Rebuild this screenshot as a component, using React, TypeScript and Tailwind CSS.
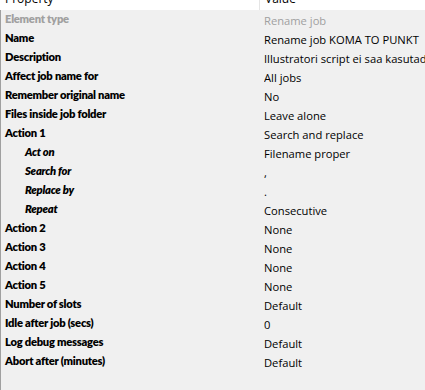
type Row = { label: string; value: string; sub?: boolean; disabled?: boolean };

const rows: Row[] = [
  { label: 'Element type', value: 'Rename job', disabled: true },
  { label: 'Name', value: 'Rename job KOMA TO PUNKT' },
  { label: 'Description', value: 'Illustratori script ei saa kasutada komasid' },
  { label: 'Affect job name for', value: 'All jobs' },
  { label: 'Remember original name', value: 'No' },
  { label: 'Files inside job folder', value: 'Leave alone' },
  { label: 'Action 1', value: 'Search and replace' },
  { label: 'Act on', value: 'Filename proper', sub: true },
  { label: 'Search for', value: ',', sub: true },
  { label: 'Replace by', value: '.', sub: true },
  { label: 'Repeat', value: 'Consecutive', sub: true },
  { label: 'Action 2', value: 'None' },
  { label: 'Action 3', value: 'None' },
  { label: 'Action 4', value: 'None' },
  { label: 'Action 5', value: 'None' },
  { label: 'Number of slots', value: 'Default' },
  { label: 'Idle after job (secs)', value: '0' },
  { label: 'Log debug messages', value: 'Default' },
  { label: 'Abort after (minutes)', value: 'Default' },
];

export default function App() {
  return (
    <div className="w-[425px] h-[390px] overflow-hidden bg-[#f0f0f0] flex flex-col">
      {/* Header (scrolled, only the bottom part shows) */}
      <div className="h-[10px] bg-white flex overflow-hidden shrink-0 text-[12px] text-black" style={{ fontFamily: '"Open Sans", sans-serif' }}>
        <div className="w-[260px] border-r border-[#e5e5e5] pl-[5px] -mt-[9px] leading-[16px]">Property</div>
        <div className="flex-1 pl-[5px] -mt-[9px] leading-[16px]">Value</div>
      </div>

      <div className="flex-1 border-l border-[#a0a0a0]">
        {rows.map((r) => (
          <div key={r.label} className="flex h-[19px] items-start">
            <div
              className={`w-[263px] shrink-0 font-extrabold text-[11.2px] tracking-[-0.25px] leading-[15px] pt-[1px] ${r.sub ? 'pl-[24px] italic' : 'pl-[4px]'} ${r.disabled ? 'text-[#a0a0a0]' : 'text-black'}`}
              style={{ fontFamily: 'Lato, "Liberation Sans", sans-serif' }}
            >
              {r.label}
            </div>
            <div
              className={`flex-1 whitespace-nowrap overflow-hidden text-[11.2px] leading-[16px] pt-[3px] ${r.disabled ? 'text-[#a0a0a0]' : 'text-black'}`}
              style={{ fontFamily: '"Open Sans", sans-serif' }}
            >
              {r.value}
            </div>
          </div>
        ))}
      </div>
    </div>
  );
}
